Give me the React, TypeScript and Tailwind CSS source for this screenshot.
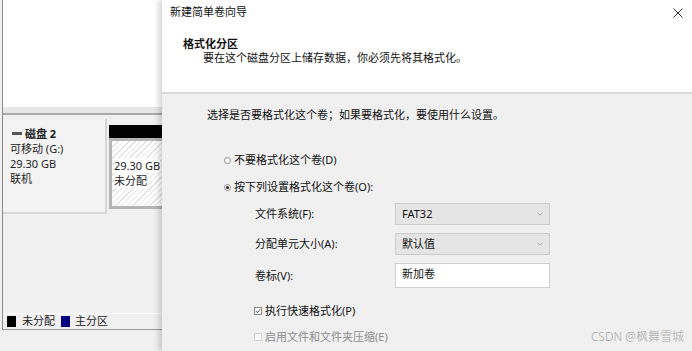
import React from "react";

const font = "font-['Segoe_UI','Noto_Sans','Noto_Sans_CJK_SC',sans-serif]";

function LeftPane() {
  return (
    <div className="w-[162px] h-full bg-[#f0f0f0] pl-[2px] flex flex-col shrink-0">
      <div className="flex flex-col border-l border-[#8a8a8a] h-[330px]">
        <div className="h-[107px] bg-white" />
        <div className="h-[6px] bg-[#e6e6e6]" />
        <div className="h-[2px] bg-[#a9a9a9]" />
        <div className="h-[4px] bg-[#f0f0f0]" />
        {/* disk row */}
        <div className="flex h-[95px]">
          <div className="w-[104px] bg-[#f3f3f3] border-r-2 border-b-2 border-[#d6d6d6] pl-[7px] pt-[7px] text-[11px] leading-[15px] text-[#222]">
            <div className="flex items-center">
              <span className="w-[10px] h-[3px] bg-[#555] mr-[3px] ml-[2px]" />
              <span className="font-bold">磁盘 2</span>
            </div>
            <div>可移动 (G:)</div>
            <div>29.30 GB</div>
            <div>联机</div>
          </div>
          <div className="flex-1 pl-[2px] pt-[6px] flex flex-col">
            <div className="h-[13px] bg-black" />
            <div className="h-[71px] border-[3px] border-[#b5b5b5] border-r-0 bg-[repeating-linear-gradient(135deg,#e2e2e2_0px,#e2e2e2_1px,#ffffff_1px,#ffffff_4px)] pl-[2px] pt-[17px] text-[11px] leading-[15px] text-[#222]">
              <div><span className="bg-white">29.30 GB</span></div>
              <div><span className="bg-white">未分配</span></div>
            </div>
          </div>
        </div>
        <div className="flex-1" />
        <div className="h-[1px] bg-white" />
        <div className="h-[16px] flex items-center text-[11px] text-[#222] pl-[4px] border-b border-[#9c9c9c]">
          <span className="w-[9px] h-[11px] bg-black mr-[6px]" />
          <span className="mr-[6px]">未分配</span>
          <span className="w-[9px] h-[11px] bg-[#000080] mr-[5px]" />
          <span>主分区</span>
        </div>
      </div>
    </div>
  );
}

function Combo({ value }: { value: string }) {
  return (
    <div className="w-[155px] h-[22px] bg-[#e5e5e5] border border-[#cccccc] flex items-center justify-between pl-[6px] pr-[6px] text-[11px] text-[#111]">
      <span>{value}</span>
      <svg width="6" height="4" viewBox="0 0 6 4">
        <path d="M0.5 0.8 L3 3.2 L5.5 0.8" fill="none" stroke="#9a9a9a" strokeWidth="0.8" />
      </svg>
    </div>
  );
}

function Dialog() {
  return (
    <div className="flex-1 h-full flex flex-col bg-[#f0f0f0] shadow-[-3px_0_6px_rgba(0,0,0,0.18)] relative">
      <div className="h-[92px] bg-white flex flex-col">
        <div className="h-[25px] flex items-center justify-between pl-[8px] pr-[9px] text-[11px] text-[#111]">
          <span>新建简单卷向导</span>
          <svg width="10" height="10" viewBox="0 0 10 10">
            <path d="M0.5 0.5 L9.5 9.5 M9.5 0.5 L0.5 9.5" stroke="#333" strokeWidth="1" />
          </svg>
        </div>
        <div className="mt-[12px] pl-[21px] text-[11px] leading-[14px] text-[#111]">
          <div className="font-bold">格式化分区</div>
          <div className="pl-[20px]">要在这个磁盘分区上储存数据，你必须先将其格式化。</div>
        </div>
      </div>
      <div className="h-[2px] bg-[#d9d9d9]" />
      <div className="flex-1 flex flex-col pl-[45px] pt-[14px] text-[11px] leading-[14px] text-[#111]">
        <div>选择是否要格式化这个卷；如果要格式化，要使用什么设置。</div>
        <div className="mt-[31px] flex items-center pl-[17px]">
          <span className="w-[7px] h-[7px] rounded-full border border-[#8a8a8a] bg-white mr-[3px]" />
          <span>不要格式化这个卷(D)</span>
        </div>
        <div className="mt-[13px] flex items-center pl-[17px]">
          <span className="w-[7px] h-[7px] rounded-full border border-[#8a8a8a] bg-white mr-[3px] flex items-center justify-center">
            <span className="w-[3px] h-[3px] rounded-full bg-[#222]" />
          </span>
          <span>按下列设置格式化这个卷(O):</span>
        </div>
        <div className="mt-[9px] flex items-center pl-[48px]">
          <span className="w-[140px]">文件系统(F):</span>
          <Combo value="FAT32" />
        </div>
        <div className="mt-[8px] flex items-center pl-[48px]">
          <span className="w-[140px]">分配单元大小(A):</span>
          <Combo value="默认值" />
        </div>
        <div className="mt-[8px] flex items-center pl-[48px]">
          <span className="w-[140px]">卷标(V):</span>
          <div className="w-[155px] h-[25px] bg-white border border-[#cfcfcf] pl-[6px] pt-[3px]">新加卷</div>
        </div>
        <div className="mt-[16px] flex items-center pl-[47px]">
          <span className="w-[8px] h-[8px] border border-[#8a8a8a] bg-white mr-[3px] flex items-center justify-center">
            <svg width="6" height="6" viewBox="0 0 6 6">
              <path d="M0.8 3 L2.4 4.6 L5.2 1.2" fill="none" stroke="#333" strokeWidth="0.9" />
            </svg>
          </span>
          <span>执行快速格式化(P)</span>
        </div>
        <div className="mt-[12px] flex items-center pl-[47px] pr-[8px]">
          <span className="w-[8px] h-[8px] border border-[#d4d4d4] bg-[#f7f7f7] mr-[3px]" />
          <span className="text-[#8d8d8d]">启用文件和文件夹压缩(E)</span>
          <span className="ml-auto text-[12px] text-[#a8a8a8] font-light">CSDN @枫舞雪城</span>
        </div>
      </div>
    </div>
  );
}

export default function App() {
  return (
    <div className={`w-[692px] h-[351px] flex overflow-hidden bg-[#f0f0f0] ${font}`}>
      <LeftPane />
      <Dialog />
    </div>
  );
}
